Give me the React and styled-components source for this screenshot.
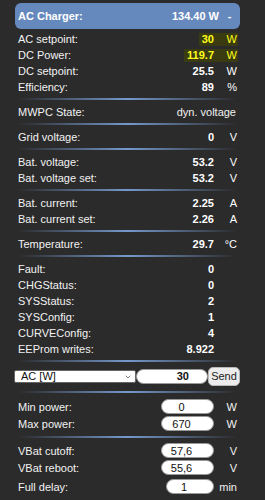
import React from 'react';
import styled, { createGlobalStyle } from 'styled-components';
import { ChevronDown } from 'lucide-react';

const GlobalStyle = createGlobalStyle`
  body {
    margin: 0;
    background: #2b2b2b;
    font-family: "Liberation Sans", Arial, sans-serif;
  }
`;

const Panel = styled.div`
  width: 225px;
  margin-left: 15px;
  padding-top: 3px;
  color: #f2f2f2;
  font-size: 11px;
`;

const Header = styled.div`
  display: flex;
  align-items: center;
  height: 26px;
  padding-left: 3px;
  margin-bottom: 2px;
  background: #6689bd;
  border-radius: 6px;
  color: #fff;
  font-weight: bold;
`;

const HeaderTitle = styled.span`
  flex: 1;
`;

const HeaderDash = styled.span`
  width: 21px;
  text-align: center;
`;

const Row = styled.div`
  display: flex;
  align-items: center;
  height: ${p => p.$h || 16}px;
  margin-top: ${p => p.$mt || 0}px;
  padding-left: 3px;
`;

const Label = styled.span`
  flex: 1;
  white-space: nowrap;
`;

const Reading = styled.span`
  display: flex;
  align-items: center;
  height: 13px;
  padding-left: 3px;
  margin-right: ${p => (p.$hl ? 2 : 0)}px;
  background: ${p => (p.$hl ? '#3b3b12' : 'transparent')};
  color: ${p => (p.$hl ? '#ffff1a' : '#fff')};
`;

const Value = styled.span`
  font-weight: bold;
  text-align: right;
  padding-right: ${p => p.$pr || 0}px;
`;

const Unit = styled.span`
  width: ${p => p.$w || 26}px;
  box-sizing: border-box;
  padding-right: ${p => p.$pr ?? 3}px;
  text-align: right;
`;

const Divider = styled.div`
  height: 2px;
  margin: ${p => p.$t ?? 3}px 3px ${p => p.$b ?? 4}px;
  background: linear-gradient(90deg, rgba(102, 137, 189, 0) 0%, #7598cc 50%, rgba(102, 137, 189, 0) 100%);
`;

const SendRow = styled.div`
  display: flex;
  align-items: center;
  height: 20px;
  margin-left: -1px;
`;

const SelectWrap = styled.div`
  position: relative;
  width: 122px;
  height: 13px;
`;

const Select = styled.select`
  appearance: none;
  width: 100%;
  height: 100%;
  box-sizing: border-box;
  margin: 0;
  padding: 0 0 0 6px;
  border: 1px solid #666;
  border-radius: 2px;
  background: #fff;
  color: #111;
  font-family: inherit;
  font-size: 11px;
  line-height: 11px;
`;

const Chevron = styled(ChevronDown)`
  position: absolute;
  right: 4px;
  top: 3px;
  pointer-events: none;
  color: #444;
`;

const NumberInput = styled.input`
  width: 72px;
  height: 15px;
  box-sizing: border-box;
  margin: 0;
  padding: 0 18px 0 0;
  border: 1px solid #999;
  border-radius: 8px;
  background: #fff;
  color: #111;
  text-align: right;
  font-family: inherit;
  font-weight: bold;
  font-size: 11px;
`;

const SendButton = styled.button`
  width: 32px;
  height: 19px;
  padding: 0;
  border: 1px solid #b8b8b8;
  border-radius: 5px;
  background: #ececec;
  color: #222;
  font-family: inherit;
  font-size: 11px;
`;

const Field = styled.input`
  width: ${p => p.$w}px;
  height: 15px;
  box-sizing: border-box;
  margin: 0;
  padding: 0 12px 0 0;
  border: 1px solid #999;
  border-radius: 8px;
  background: #fff;
  color: #111;
  text-align: center;
  font-family: inherit;
  font-size: 11px;
`;

const Reading3 = ({ label, value, unit, hl }) => (
  <Row>
    <Label>{label}</Label>
    <Reading $hl={hl}>
      <Value>{value}</Value>
      <Unit $w={hl ? 24 : 26} $pr={hl ? 1 : 3}>{unit}</Unit>
    </Reading>
  </Row>
);

const Setting = ({ label, value, unit, w = 53, h = 17, mt }) => (
  <Row $h={h} $mt={mt}>
    <Label>{label}</Label>
    <Field $w={w} defaultValue={value} />
    <Unit>{unit}</Unit>
  </Row>
);

const power = [
  { label: 'AC setpoint:', value: '30', unit: 'W', hl: true },
  { label: 'DC Power:', value: '119.7', unit: 'W', hl: true },
  { label: 'DC setpoint:', value: '25.5', unit: 'W' },
  { label: 'Efficiency:', value: '89', unit: '%' },
];

const status = [
  ['Fault:', '0'],
  ['CHGStatus:', '0'],
  ['SYSStatus:', '2'],
  ['SYSConfig:', '1'],
  ['CURVEConfig:', '4'],
  ['EEProm writes:', '8.922'],
];

export default function App() {
  return (
    <>
      <GlobalStyle />
      <Panel>
        <Header>
          <HeaderTitle>AC Charger:</HeaderTitle>
          <span>134.40 W</span>
          <HeaderDash>-</HeaderDash>
        </Header>

        {power.map(r => <Reading3 key={r.label} {...r} />)}
        <Divider />

        <Row>
          <Label>MWPC State:</Label>
          <Value as="span" style={{ fontWeight: 'normal' }} $pr={4}>dyn. voltage</Value>
        </Row>
        <Divider />

        <Reading3 label="Grid voltage:" value="0" unit="V" />
        <Divider />

        <Reading3 label="Bat. voltage:" value="53.2" unit="V" />
        <Reading3 label="Bat. voltage set:" value="53.2" unit="V" />
        <Divider />

        <Reading3 label="Bat. current:" value="2.25" unit="A" />
        <Reading3 label="Bat. current set:" value="2.26" unit="A" />
        <Divider />

        <Reading3 label="Temperature:" value="29.7" unit="°C" />
        <Divider />

        {status.map(([label, value]) => (
          <Reading3 key={label} label={label} value={value} unit="" />
        ))}
        <Divider />

        <SendRow>
          <SelectWrap>
            <Select defaultValue="ac">
              <option value="ac">AC [W]</option>
              <option value="dc">DC [W]</option>
            </Select>
            <Chevron size={8} strokeWidth={2} />
          </SelectWrap>
          <NumberInput defaultValue="30" />
          <SendButton>Send</SendButton>
        </SendRow>
        <Divider $t={5} $b={5} />

        <Setting label="Min power:" value="0" unit="W" />
        <Setting label="Max power:" value="670" unit="W" />
        <Divider $t={4} $b={4} />

        <Setting label="VBat cutoff:" value="57,6" unit="V" />
        <Setting label="VBat reboot:" value="55,6" unit="V" />
        <Setting label="Full delay:" value="1" unit="min" w={48} mt={2} />
      </Panel>
    </>
  );
}
